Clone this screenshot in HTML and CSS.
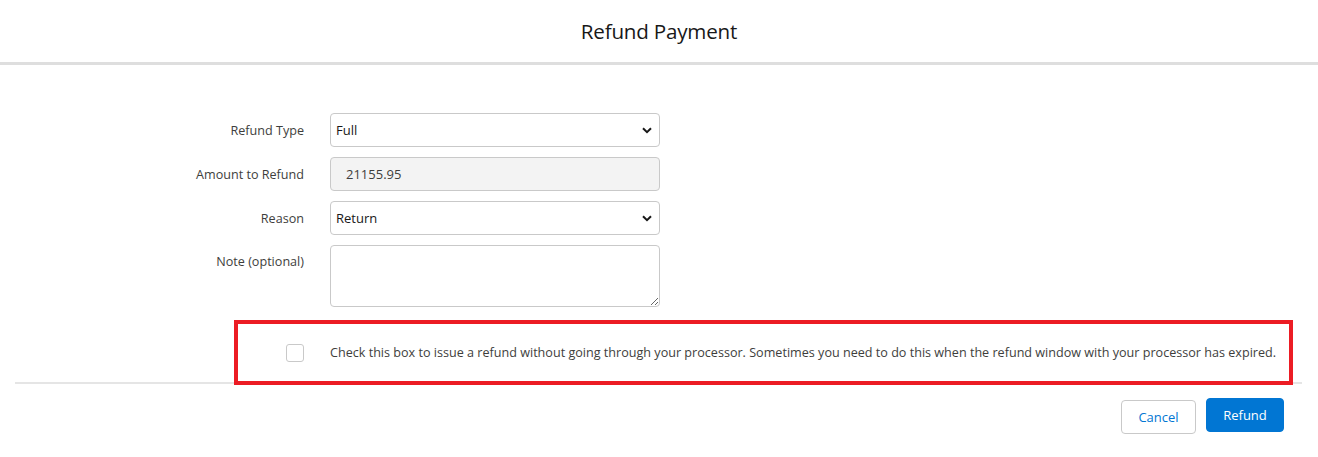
FILE: index.html
```html
<!DOCTYPE html>
<html>
<head>
<meta charset="utf-8">
<link rel="stylesheet" href="styles.css">
</head>
<body>
<div class="modal">
  <header class="header"><h1 class="title">Refund Payment</h1></header>
  <div class="body">
    <div class="form">
      <div class="row">
        <label class="label">Refund Type</label>
        <div class="control select"><span>Full</span><svg class="chev" width="10" height="7" viewBox="0 0 10 7"><path d="M1 1.2 L5 5.2 L9 1.2" fill="none" stroke="#181818" stroke-width="2"/></svg></div>
      </div>
      <div class="row">
        <label class="label">Amount to Refund</label>
        <div class="control readonly"><span>21155.95</span></div>
      </div>
      <div class="row">
        <label class="label">Reason</label>
        <div class="control select"><span>Return</span><svg class="chev" width="10" height="7" viewBox="0 0 10 7"><path d="M1 1.2 L5 5.2 L9 1.2" fill="none" stroke="#181818" stroke-width="2"/></svg></div>
      </div>
      <div class="row row-top">
        <label class="label label-top">Note (optional)</label>
        <textarea class="control textarea"></textarea>
      </div>
    </div>
    <div class="check-row">
      <span class="checkbox"></span>
      <span class="check-text">Check this box to issue a refund without going through your processor. Sometimes you need to do this when the refund window with your processor has expired.</span>
    </div>
  </div>
  <footer class="footer">
    <button class="btn btn-neutral">Cancel</button>
    <button class="btn btn-brand">Refund</button>
  </footer>
  <div class="highlight"></div>
</div>
</body>
</html>
```
FILE: styles.css
```css
* { box-sizing: border-box; }
html, body { margin: 0; padding: 0; background: #fff; }
body {
  font-family: "Open Sans", "Noto Sans", sans-serif;
  color: #181818;
  width: 1318px;
  height: 457px;
  overflow: hidden;
}
.modal { position: relative; height: 457px; }
.header {
  height: 65px;
  display: flex;
  align-items: center;
  justify-content: center;
  border-bottom: 3px solid #dedede;
  padding-bottom: 1px;
}
.title {
  margin: 0;
  font-size: 20.6px;
  font-weight: 400;
  color: #181818;
  letter-spacing: -0.2px;
}
.body { padding-top: 48px; }
.form { display: flex; flex-direction: column; gap: 10px; }
.row {
  display: grid;
  grid-template-columns: 304px 330px;
  column-gap: 26px;
  align-items: center;
}
.row-top { align-items: start; }
.label {
  text-align: right;
  font-size: 12.6px;
  color: #3e3e3c;
}
.label-top { padding-top: 8px; }
.control {
  height: 34px;
  border: 1px solid #c9c9c9;
  border-radius: 4px;
  font-family: inherit;
  font-size: 13px;
  color: #181818;
  display: flex;
  align-items: center;
}
.select { justify-content: space-between; padding: 0 7px 0 5px; }
.chev { display: block; margin-top: 1px; }
.readonly { background: #f3f3f3; padding-left: 15px; color: #3e3e3c; }
.textarea {
  height: 62px;
  width: 330px;
  resize: vertical;
  display: block;
  padding: 6px;
}
.check-row {
  display: flex;
  align-items: center;
  height: 77px;
  padding-left: 271px;
  padding-top: 16px;
  margin-right: 16px;
  margin-left: 15px;
  border-bottom: 2px solid #e5e5e5;
}
.checkbox {
  width: 18px;
  height: 18px;
  border: 1px solid #c9c9c9;
  border-radius: 3px;
  margin-right: 26px;
}
.check-text { font-size: 12.6px; color: #3e3e3c; }
.footer {
  display: flex;
  justify-content: flex-end;
  align-items: flex-start;
  gap: 10px;
  padding: 14px 34px 0 0;
}
.btn {
  font-family: inherit;
  font-size: 13px;
  height: 34px;
  border-radius: 4px;
  padding: 0 16px;
}
.btn-neutral {
  background: #fff;
  border: 1px solid #c9c9c9;
  color: #0176d3;
  margin-top: 2px;
  width: 75px;
}
.btn-brand {
  background: #0176d3;
  border: 1px solid #0176d3;
  color: #fff;
  width: 78px;
}
.highlight {
  position: absolute;
  left: 234px;
  top: 320px;
  width: 1059px;
  height: 65px;
  border: 4px solid #ec1c24;
  pointer-events: none;
}
```
